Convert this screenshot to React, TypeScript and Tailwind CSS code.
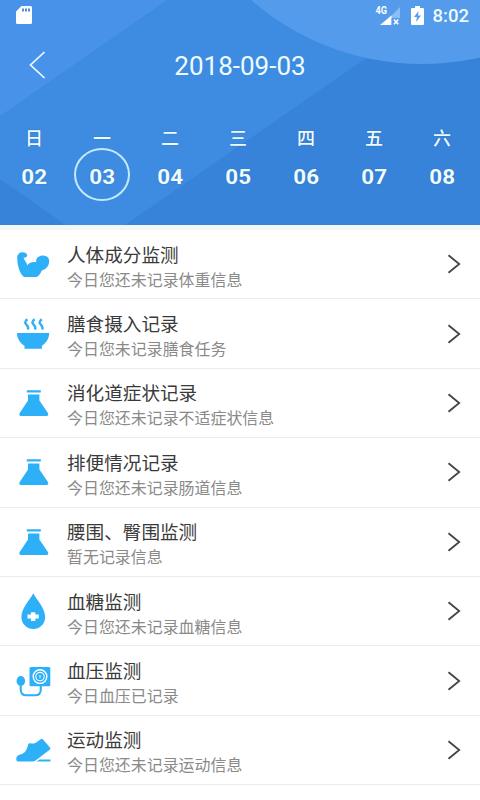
import React from 'react';

type IconName = 'muscle' | 'bowl' | 'flask' | 'drop' | 'pressure' | 'shoe';

interface RecordItem {
  icon: IconName;
  title: string;
  note: string;
}

const days = [
  { label: '日', date: '02' },
  { label: '一', date: '03' },
  { label: '二', date: '04' },
  { label: '三', date: '05' },
  { label: '四', date: '06' },
  { label: '五', date: '07' },
  { label: '六', date: '08' },
];

const records: RecordItem[] = [
  { icon: 'muscle', title: '人体成分监测', note: '今日您还未记录体重信息' },
  { icon: 'bowl', title: '膳食摄入记录', note: '今日您未记录膳食任务' },
  { icon: 'flask', title: '消化道症状记录', note: '今日您还未记录不适症状信息' },
  { icon: 'flask', title: '排便情况记录', note: '今日您还未记录肠道信息' },
  { icon: 'flask', title: '腰围、臀围监测', note: '暂无记录信息' },
  { icon: 'drop', title: '血糖监测', note: '今日您还未记录血糖信息' },
  { icon: 'pressure', title: '血压监测', note: '今日血压已记录' },
  { icon: 'shoe', title: '运动监测', note: '今日您还未记录运动信息' },
];

const iconShapes: Record<IconName, React.ReactNode> = {
  muscle: (
    <path d="M1.2 12.5C1 9 3 6.2 6 6.2C8.8 5.8 11.2 7.4 11.2 9.2C11.2 11 9.4 11.9 7.6 11.6C8 14 10.4 15.8 11.2 19.2C13.5 16.4 16.5 15.6 20.2 16.2C19.6 12.2 22.8 9.6 27 9.6C31.2 9.7 33.5 12.2 33.2 15.7C32.8 20.4 29.8 23.2 25.8 24.5C24.8 27.5 22.8 29.8 20.6 31H8C3.6 27.6 1.4 19.5 1.2 12.5Z" />
  ),
  bowl: (
    <>
      <path d="M1 17H33.2C33.2 22.5 30 27.2 25.9 29.7V32.7H8.5V29.7C4.2 27.2 1 22.5 1 17Z" />
      <path
        d="M11.4 3.2C5.2 8 14.2 8.6 11.8 13.6M18.6 3.2C12.4 8 21.4 8.6 19 13.6M25.8 3.2C19.6 8 28.6 8.6 26.2 13.6"
        fill="none"
        stroke="currentColor"
        strokeWidth="2.4"
      />
    </>
  ),
  flask: (
    <path d="M10.8 5.2H24.8V7.4H10.8ZM12 9.6H23.4V15.5L31.6 27.4C33 29.6 32 31 30.2 31H5.4C3.6 31 2.6 29.6 4 27.4L12 15.5Z" />
  ),
  drop: (
    <>
      <path d="M17.3 0.3C21 7.3 29.2 15.5 29.2 24A11.9 12 0 0 1 5.4 24C5.4 15.5 13.6 7.3 17.3 0.3Z" />
      <path d="M15 19.2H19.3V21.6H22.8V25.5H19.3V28H15V25.5H11.5V21.6H15Z" fill="#fff" />
    </>
  ),
  pressure: (
    <>
      <rect x="13.5" y="4" width="20.8" height="19.3" rx="1.5" />
      <circle cx="24" cy="13.6" r="6.8" fill="none" stroke="#fff" strokeWidth="1.4" />
      <circle cx="24" cy="13.6" r="4.2" fill="none" stroke="#fff" strokeWidth="1.1" />
      <path d="M24 12V15.2" stroke="#fff" strokeWidth="1" />
      <ellipse cx="4.8" cy="18" rx="4.3" ry="5.1" />
      <path
        d="M4.7 21V26.5Q4.7 32.3 10.5 32.3H19Q24.8 32.3 24.8 26.5V23"
        fill="none"
        stroke="currentColor"
        strokeWidth="2.1"
      />
    </>
  ),
  shoe: (
    <path d="M0.3 27C0.3 23.8 2.5 22.8 5.5 22.2C9.5 20.8 11 17 12 13C12.6 11.2 13.6 11.2 15 11.4C17.5 11.8 19.5 11.3 21.3 9.8L25 7Q26 6.2 27 7.4L34.2 15.8Q34.8 16.6 34 17.4L19.6 28.6Q18.3 29.6 16.6 29.6H2C0.8 29.6 0.3 28.5 0.3 27ZM23.6 27.4H34.5V29.6H20.6Z" />
  ),
};

function RecordIcon({ name }: { name: IconName }) {
  return (
    <svg viewBox="0 0 36 36" fill="currentColor" className="ml-4 h-9 w-9 shrink-0 text-[#2eb0f9]">
      {iconShapes[name]}
    </svg>
  );
}

function HeaderBackdrop() {
  return (
    <svg viewBox="0 0 480 225" className="absolute inset-0 h-full w-full">
      <rect width="480" height="225" fill="#3e8be2" />
      <path d="M0 0H167L0 116Z" fill="#4893e9" />
      <path d="M480 0V225H125L370 55.5Z" fill="#3783d9" />
      <path d="M0 179L66 225H0Z" fill="#3783d9" />
      <circle cx="422" cy="-196" r="260" fill="#559beb" />
    </svg>
  );
}

function StatusBar() {
  return (
    <div className="flex h-[30px] items-center justify-between pr-[11px] pl-4">
      <svg viewBox="0 0 16 18" className="h-[18px] w-4">
        <path d="M5.5 0H14.5Q16 0 16 1.5V16.5Q16 18 14.5 18H1.5Q0 18 0 16.5V5.5Z" fill="#fff" />
        <path d="M6 2.5H8V5.5H6ZM9 2.5H11V5.5H9ZM12 2.5H14V5.5H12Z" fill="#4893e9" />
      </svg>
      <div className="flex items-center">
        <svg viewBox="0 0 26 20" className="mr-[10px] h-5 w-[26px]">
          <path d="M25 2V20H7Z" fill="#8bbcf3" />
          <path d="M16.5 10.5V20H5Z" fill="#fff" />
          <path d="M16.5 13H25V20H16.5Z" fill="#559beb" />
          <path d="M19 14.5L23.3 19.2M23.3 14.5L19 19.2" stroke="#fff" strokeWidth="1.6" />
          <text x="0.5" y="9.2" fill="#fff" className="font-['Roboto',sans-serif] text-[10px] font-bold" textLength="11.5" lengthAdjust="spacingAndGlyphs">
            4G
          </text>
        </svg>
        <svg viewBox="0 0 13 19" className="mr-[9px] h-[19px] w-[13px]">
          <path d="M4 0H9V2H12Q13 2 13 3V18Q13 19 12 19H1Q0 19 0 18V3Q0 2 1 2H4Z" fill="#fff" />
          <path d="M7.5 5L3 11H6L5 16L10 9.5H7Z" fill="#559beb" />
        </svg>
        <span className="pt-[2px] text-[18.5px] leading-none font-medium">8:02</span>
      </div>
    </div>
  );
}

function Header() {
  return (
    <header className="relative h-[225px] overflow-hidden text-[#effcff]">
      <HeaderBackdrop />
      <div className="relative">
        <StatusBar />
        <div className="grid h-[72px] grid-cols-[80px_1fr_80px] items-center">
          <svg viewBox="0 0 18 28" className="mb-[2px] ml-[29px] h-7 w-[18px]" fill="none">
            <path d="M15.5 1L1.5 14L15.5 27" stroke="currentColor" strokeWidth="1.7" />
          </svg>
          <h1 className="text-center text-[26px] leading-none">2018-09-03</h1>
        </div>
        <div className="grid grid-cols-7 pt-6 pr-[4px] [text-shadow:0_0_1px_#245fa5]">
          {days.map((day) => (
            <div key={day.date} className="flex flex-col items-center">
              <span className="h-[22px] text-[18px] leading-[26px] font-medium">{day.label}</span>
              <span
                className={`flex h-[53px] w-14 items-center justify-center rounded-[50%] border-2 pt-[6px] text-[19.5px] leading-none font-bold ${
                  day.date === '03' ? 'border-[#c3ebff]' : 'border-transparent'
                }`}
              >
                <span className="scale-x-[1.15]">{day.date}</span>
              </span>
            </div>
          ))}
        </div>
      </div>
    </header>
  );
}

function RecordRow({ icon, title, note }: RecordItem) {
  return (
    <li className="flex h-[69.4px] items-center border-b-[1.5px] border-[#ebebeb]">
      <RecordIcon name={icon} />
      <div className="ml-[15px] flex-1 pt-[7px]">
        <p className="text-[18.6px] leading-[26px] text-[#3a3a3a]">{title}</p>
        <p className="text-[15.95px] leading-[24px] text-[#8a8a8a]">{note}</p>
      </div>
      <svg viewBox="0 0 14 20" className="mr-[19px] h-5 w-[14px]" fill="none">
        <path d="M1.5 1.2L12.2 10L1.5 18.8" stroke="#444" strokeWidth="1.8" />
      </svg>
    </li>
  );
}

export default function App() {
  return (
    <div className="h-[800px] w-[480px] overflow-hidden bg-white font-['Roboto','Noto_Sans_CJK_SC',sans-serif]">
      <Header />
      <main className="border-t-[5px] border-[#f3f5f6]">
        <ul>
          {records.map((record) => (
            <RecordRow key={record.title} {...record} />
          ))}
        </ul>
      </main>
    </div>
  );
}
